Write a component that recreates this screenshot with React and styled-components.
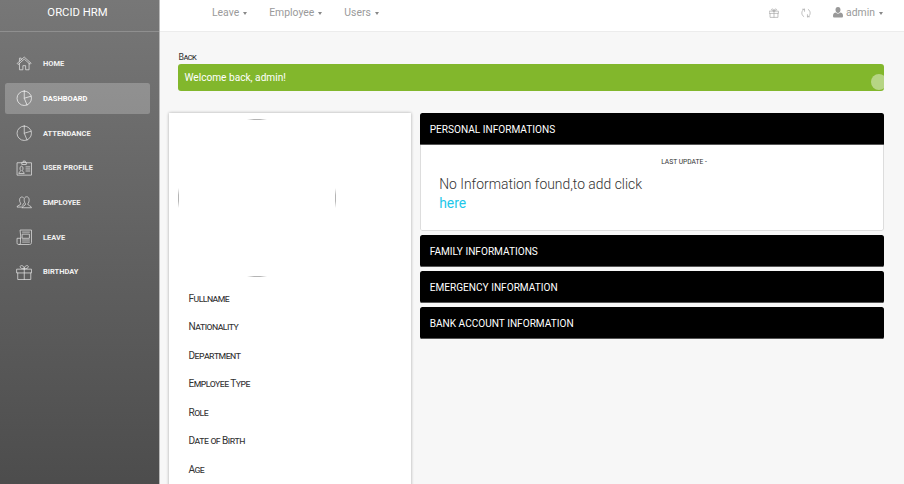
import React from "react";
import styled, { createGlobalStyle } from "styled-components";

const GlobalStyle = createGlobalStyle`
  *, *::before, *::after { box-sizing: border-box; }
  body {
    margin: 0;
    overflow: hidden;
    background: #f7f7f7;
    font-family: Roboto, sans-serif;
    color: #333;
  }
  h1, h2, p, ul { margin: 0; padding: 0; font-weight: 400; }
  a { text-decoration: none; color: inherit; }
`;

const Shell = styled.div`
  display: grid;
  grid-template-columns: 160px 1fr;
  width: 904px;
  height: 484px;
  overflow: hidden;
`;

const Sidebar = styled.aside`
  background: linear-gradient(to bottom, #777777, #4a4a4a);
  border-right: 1px solid #b9b9b9;
`;

const Brand = styled.h1`
  height: 32px;
  padding: 4px 4px 0 0;
  border-bottom: 1px solid rgba(255, 255, 255, 0.2);
  color: #fff;
  font-size: 11.3px;
  line-height: 17px;
  text-align: center;
`;

const Menu = styled.nav`
  display: flex;
  flex-direction: column;
  gap: 3.3px;
  padding: 16px 9px 0 5px;
`;

const MenuItem = styled.a`
  display: flex;
  align-items: center;
  gap: 11px;
  height: 31.4px;
  padding-left: 10.5px;
  border-radius: 2.5px;
  background: ${(p) => (p.$active ? "rgba(255,255,255,0.23)" : "transparent")};
  color: ${(p) => (p.$active ? "#fff" : "#f1f1f1")};
  font-size: 7.5px;
  font-weight: 700;
  text-transform: uppercase;
`;

const Icon = styled.svg`
  width: ${(p) => p.$size}px;
  height: ${(p) => p.$size}px;
  flex: none;
  fill: none;
  stroke: currentColor;
  opacity: 0.85;
  stroke-width: ${(p) => p.$weight};
  stroke-linejoin: round;
  stroke-linecap: round;
`;

const Main = styled.main`
  min-width: 0;
`;

const TopBar = styled.header`
  display: flex;
  justify-content: space-between;
  height: 32px;
  padding: 4px 21px 0 52px;
  background: #fff;
  border-bottom: 1px solid #ececec;
  color: #9a9a9a;
`;

const NavGroup = styled.div`
  display: flex;
  gap: ${(p) => p.$gap}px;
  height: 17px;
  align-items: center;
`;

const NavLink = styled.a`
  display: flex;
  align-items: center;
  font-size: 10.4px;
  line-height: 17px;
`;

const Caret = styled.span`
  margin: 2px 0 0 4px;
  border: solid transparent;
  border-width: 2.5px 2.5px 0;
  border-top-width: 3px;
  border-top-color: #888;
`;

const Person = styled.svg`
  width: 10px;
  height: 11px;
  margin-right: 3px;
  fill: #999;
`;

const Content = styled.div`
  padding: 20px 20px 0 9px;
`;

const BackLink = styled.a`
  display: block;
  height: 12px;
  margin-left: 9.5px;
  font-size: 8.8px;
  line-height: 11px;
  letter-spacing: -0.6px;
  font-variant: small-caps;
`;

const Alert = styled.div`
  display: flex;
  align-items: center;
  position: relative;
  height: 27px;
  margin-left: 9px;
  padding-left: 6.5px;
  border-radius: 3px;
  background: #82b72c;
  color: #fff;
  font-size: 10.15px;
  overflow: hidden;
`;

const AlertDot = styled.span`
  position: absolute;
  right: -3px;
  top: 10px;
  width: 16px;
  height: 16px;
  border-radius: 50%;
  background: rgba(255, 255, 255, 0.42);
`;

const Columns = styled.div`
  display: grid;
  grid-template-columns: 241.5px 463.7px;
  column-gap: 9.8px;
  align-items: start;
  margin-top: 22px;
`;

const ProfileCard = styled.section`
  height: 400px;
  padding: 6px 9px 0;
  background: #fff;
  box-shadow: 0 0 3px rgba(0, 0, 0, 0.32);
`;

const Avatar = styled.div`
  width: 158px;
  height: 158px;
  background:
    linear-gradient(to right, transparent, #b4b4b4 35%, #b4b4b4 65%, transparent) center top / 20px 1px no-repeat,
    linear-gradient(to right, transparent, #b4b4b4 35%, #b4b4b4 65%, transparent) center bottom / 20px 1px no-repeat,
    linear-gradient(to bottom, transparent, #b4b4b4 35%, #b4b4b4 65%, transparent) left center / 1px 20px no-repeat,
    linear-gradient(to bottom, transparent, #b4b4b4 35%, #b4b4b4 65%, transparent) right center / 1px 20px no-repeat;
`;

const FieldList = styled.ul`
  padding: 7.7px 0 0 10.5px;
  list-style: none;
`;

const Field = styled.li`
  height: 28.55px;
  font-size: 10.1px;
  line-height: 28.5px;
  letter-spacing: -0.54px;
  font-variant: small-caps;
`;

const Accordion = styled.div`
  display: flex;
  flex-direction: column;
  gap: 4px;
  margin-left: -0.6px;
`;

const Panel = styled.section`
  border-radius: 2.5px;
  background: #fff;
  overflow: hidden;
`;

const PanelTitle = styled.h2`
  height: 32px;
  padding-left: 10px;
  border: solid #555;
  border-width: 0 0 1px;
  background: #000;
  color: #fff;
  font-size: 10.1px;
  line-height: 33px;
  text-transform: uppercase;
`;

const PanelBody = styled.div`
  height: 86px;
  padding: 12px 18.5px 0;
  border: 1px solid #ddd;
  border-top: 0;
  border-radius: 0 0 2.5px 2.5px;
`;

const Updated = styled.p`
  padding-left: 222px;
  font-size: 6.7px;
  line-height: 10px;
  text-transform: uppercase;
`;

const Message = styled.p`
  width: 230px;
  margin-top: 8px;
  font-size: 13.9px;
  font-weight: 300;
  line-height: 19px;
`;

const InfoLink = styled.a`
  display: block;
  color: #1dc7ea;
  font-weight: 400;
`;

const drawings = {
  home: <path d="M2 12 12 3l10 9-1.500 1.500L12 6l-8.500 7.500zM5 12v9.500h5v-6h4v6h5V12M5 9V4.500h2.500v2" />,
  pie: <path d="M12 1.500a10.500 10.500 0 1 0 0 21 10.500 10.500 0 0 0 0-21zM12 1.500V12l4 9.700M12 12l10-3" />,
  card: (
    <path d="M9 4H1.500v18h21V4H15M9 3.500h6v3H9zM10.500 3.500v-2h3v2M4 19c0-2 3-2 3-3.500-2-2-1.500-6.500 1-6.500s3 4.500 1 6.500c0 1.500 3 1.500 3 3.500zM14.500 10h5.500M14.500 13h5.500M14.500 16h5.500" />
  ),
  users: (
    <path d="M10 20h12.500c0-3-5.500-3-5.500-5.500 3-3 3-10.500-1.500-10.500S11 11.500 14 14.500c0 2.500-5 2.500-5 5.500zM11 5.500C8.500 2.500 4 5 5.500 11c.3 1.500 1.500 2 1.500 3.500 0 2-5.500 1.500-5.500 4.500H9M11 14c0 1-1 2-2 2.500" />
  ),
  news: (
    <path d="M6.500 1.500h16v18c0 2-1 3-3 3H4c-2 0-2.500-1-2.500-3v-6h5zM6.500 13v7c0 1.500-.5 2.500-2 2.500M9.500 4.500h10M9.500 7.500h10v6h-10zM9.500 16h10M9.500 19h10" />
  ),
  gift: (
    <path d="M1.500 7.500h21v5.500h-21zM2.500 13v9.500h19V13M12 7.500v15M12 7C9 7 6 6 6 4c0-1.500 1.500-2 3-1.500C11 3 12 5 12 7zM12 7c3 0 6-1 6-3 0-1.500-1.500-2-3-1.500C13 3 12 5 12 7z" />
  ),
  refresh: (
    <path d="M8.500 2.500C4.500 4 2 7.500 2 12c0 3.500 1.500 6.500 4.500 8.500M3.500 3h5v5M15.500 21.500c4-1.500 6.500-5 6.500-9.500 0-3.500-1.500-6.500-4.500-8.500M20.500 21h-5v-5" />
  ),
};

function Glyph({ name, size = 16.5, weight = 1.15 }) {
  return (
    <Icon viewBox="0 0 24 24" $size={size} $weight={weight} aria-hidden="true">
      {drawings[name]}
    </Icon>
  );
}

const menu = [
  ["home", "Home"],
  ["pie", "Dashboard"],
  ["pie", "Attendance"],
  ["card", "User Profile"],
  ["users", "Employee"],
  ["news", "Leave"],
  ["gift", "Birthday"],
];

const fields = ["Fullname", "Nationality", "Department", "Employee Type", "Role", "Date of Birth", "Age"];

export default function App() {
  return (
    <>
      <GlobalStyle />
      <Shell>
        <Sidebar>
          <Brand>ORCID HRM</Brand>
          <Menu>
            {menu.map(([icon, label]) => (
              <MenuItem key={label} href="#" $active={label === "Dashboard"}>
                <Glyph name={icon} />
                {label}
              </MenuItem>
            ))}
          </Menu>
        </Sidebar>
        <Main>
          <TopBar>
            <NavGroup $gap={22}>
              {["Leave", "Employee", "Users"].map((label) => (
                <NavLink key={label} href="#">
                  {label}
                  <Caret />
                </NavLink>
              ))}
            </NavGroup>
            <NavGroup $gap={22}>
              <Glyph name="gift" size={10} weight={1.7} />
              <Glyph name="refresh" size={10} weight={1.7} />
              <NavLink href="#">
                <Person viewBox="0 0 20 22">
                  <path d="M10 0c3.500 0 5 2.500 5 5.500S13 12 10 12 5 8.500 5 5.500 6.500 0 10 0zM5 11c3 3 7 3 10 0 4 .5 5 3.500 5 7 0 2-1 3-3 3H3c-2 0-3-1-3-3 0-3.500 1-6.500 5-7z" />
                </Person>
                admin
                <Caret />
              </NavLink>
            </NavGroup>
          </TopBar>
          <Content>
            <BackLink href="#">Back</BackLink>
            <Alert>
              Welcome back, admin!
              <AlertDot />
            </Alert>
            <Columns>
              <ProfileCard>
                <Avatar />
                <FieldList>
                  {fields.map((label) => (
                    <Field key={label}>{label}</Field>
                  ))}
                </FieldList>
              </ProfileCard>
              <Accordion>
                <Panel>
                  <PanelTitle>Personal Informations</PanelTitle>
                  <PanelBody>
                    <Updated>Last update -</Updated>
                    <Message>
                      No Information found,to add click <InfoLink href="#">here</InfoLink>
                    </Message>
                  </PanelBody>
                </Panel>
                {["Family Informations", "Emergency Information", "Bank Account Information"].map((title) => (
                  <Panel key={title}>
                    <PanelTitle>{title}</PanelTitle>
                  </Panel>
                ))}
              </Accordion>
            </Columns>
          </Content>
        </Main>
      </Shell>
    </>
  );
}
